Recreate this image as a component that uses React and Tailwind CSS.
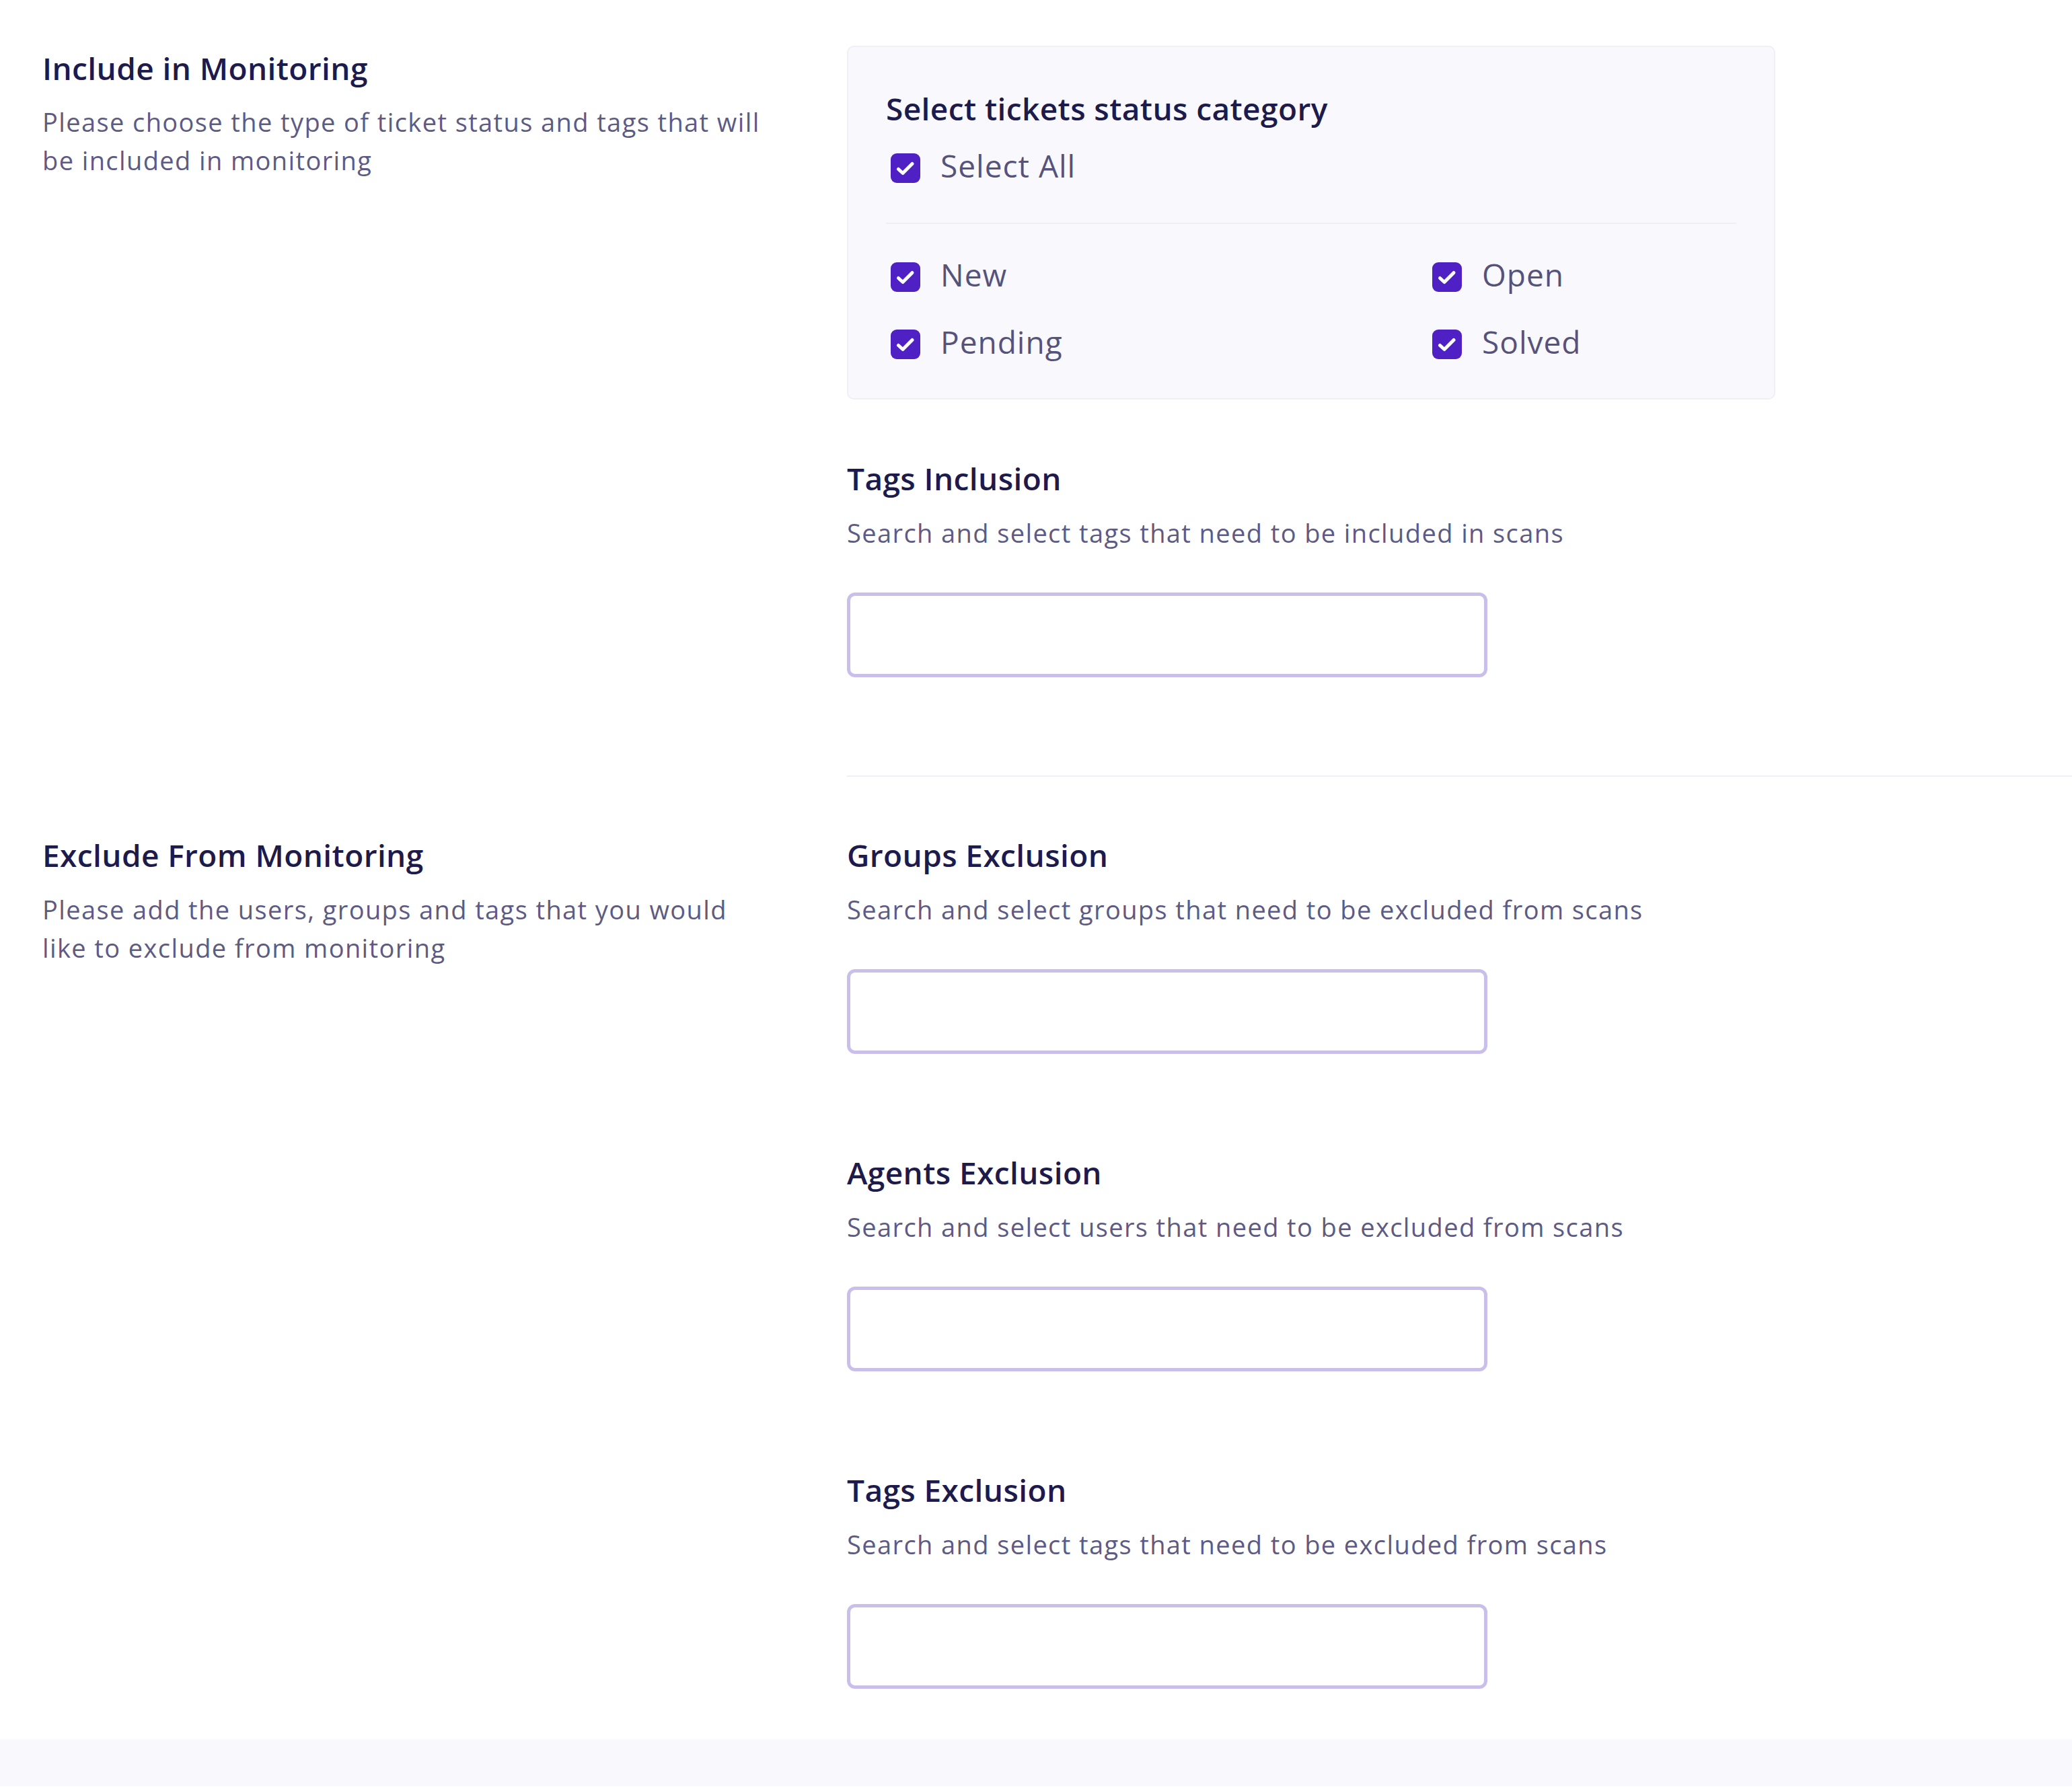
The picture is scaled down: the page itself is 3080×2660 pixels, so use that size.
import React from "react";

const font = { fontFamily: '"Open Sans", "Liberation Sans", sans-serif' };

const Check = () => (
	<span className="flex h-[44px] w-[44px] flex-none items-center justify-center rounded-[9px] bg-[#4f20c4]">
		<svg width="44" height="44" viewBox="0 0 44 44" fill="none" stroke="#ffffff" strokeWidth="5" strokeLinecap="round" strokeLinejoin="round">
			<path d="M11.5 23.5l6.5 6 14-14" />
		</svg>
	</span>
);

const CheckRow = ({ label }) => (
	<label className="flex h-[44px] items-center gap-[30px] pl-[7px]">
		<Check />
		<span className="relative -top-[4px] text-[46px] leading-[44px] tracking-[1px] text-[#55537c]">{label}</span>
	</label>
);

const Heading = ({ children }) => (
	<h3 className="text-[46px] font-semibold leading-[60px] tracking-[0.4px] text-[#1d1b4c]">{children}</h3>
);

const Desc = ({ children, className = "" }) => (
	<p className={"text-[38px] leading-[57px] tracking-[1.4px] text-[#5d5b83] " + className}>{children}</p>
);

const Field = ({ title, desc, className = "" }) => (
	<div className={className}>
		<Heading>{title}</Heading>
		<Desc className="mt-[23px]">{desc}</Desc>
		<div className="mt-[60px] h-[126px] w-[952px] rounded-[12px] border-[5px] border-[#cabeea] bg-white" />
	</div>
);

export default function App() {
	const statuses = ["New", "Open", "Pending", "Solved"];

	return (
		<div className="min-h-[2660px] w-[3080px] bg-white" style={font}>
			{/* include */}
			<div className="flex pl-[63px] pt-[68px]">
				<div className="w-[1196px] flex-none pt-[3px]">
					<Heading>Include in Monitoring</Heading>
					<Desc className="mt-[22px] max-w-[1070px]">
						Please choose the type of ticket status and tags that will be included in monitoring
					</Desc>
				</div>
				<div className="flex-1">
					<div className="w-[1380px] rounded-[10px] border-2 border-[#efeff6] bg-[#f9f9fd] px-[56px] pb-[58px] pt-[61px]">
						<Heading>Select tickets status category</Heading>
						<div className="mt-[37px]">
							<CheckRow label="Select All" />
						</div>
						<div className="mt-[59px] border-t-2 border-[#efeff5]" />
						<div className="mt-[57px] grid grid-cols-[805px_1fr] gap-y-[56px]">
							{statuses.map((s) => (
								<CheckRow key={s} label={s} />
							))}
						</div>
					</div>
					<Field
						className="mt-[87px]"
						title="Tags Inclusion"
						desc="Search and select tags that need to be included in scans"
					/>
					<div className="mt-[146px] border-t-2 border-[#efeff5]" />
				</div>
			</div>

			{/* exclude */}
			<div className="flex pl-[63px] pt-[86px]">
				<div className="w-[1196px] flex-none">
					<Heading>Exclude From Monitoring</Heading>
					<Desc className="mt-[23px] max-w-[1070px]">
						Please add the users, groups and tags that you would like to exclude from monitoring
					</Desc>
				</div>
				<div className="flex-1">
					<Field title="Groups Exclusion" desc="Search and select groups that need to be excluded from scans" />
					<Field
						className="mt-[146px]"
						title="Agents Exclusion"
						desc="Search and select users that need to be excluded from scans"
					/>
					<Field
						className="mt-[146px]"
						title="Tags Exclusion"
						desc="Search and select tags that need to be excluded from scans"
					/>
				</div>
			</div>

			<div className="mt-[75px] h-[70px] bg-[#f9f9fd]" />
		</div>
	);
}
